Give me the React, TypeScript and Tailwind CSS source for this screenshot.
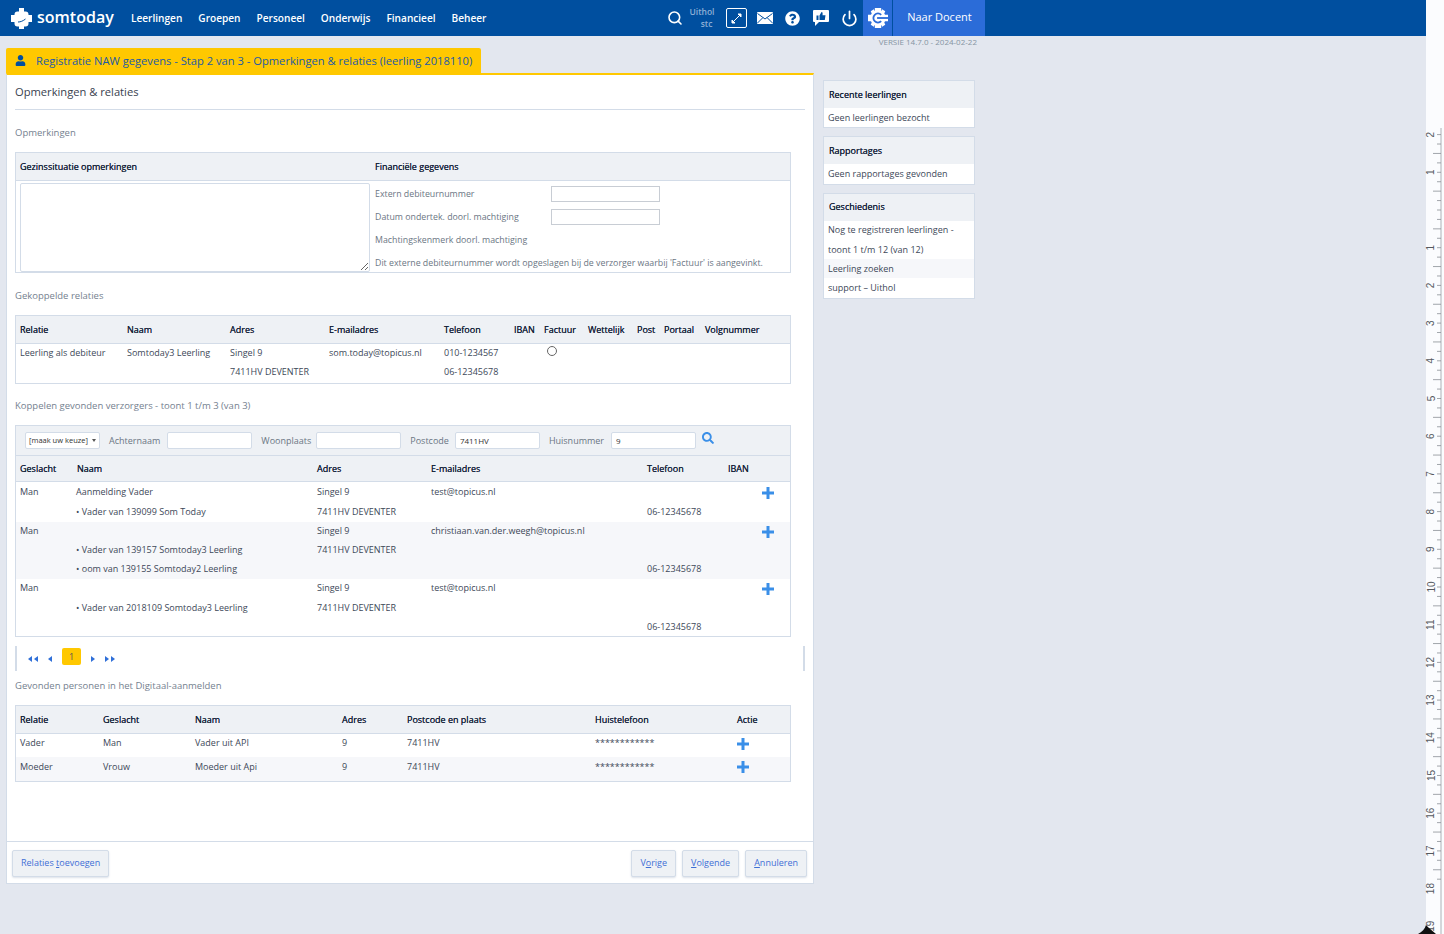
import React from "react";
import { FaUser, FaQuestionCircle, FaSearch } from "react-icons/fa";
import { Search, Power } from "lucide-react";

const Plus = () => (
  <svg width="12" height="12" viewBox="0 0 12 12" className="block translate-y-px">
    <path d="M4.5 0h3v4.5H12v3H7.5V12h-3V7.5H0v-3h4.5z" fill="#3a8fe8" />
  </svg>
);

const Logo = () => (
  <svg width="22" height="22" viewBox="0 0 22 22">
    <path d="M8 1h5v3.5h1.5a3 3 0 0 1 3 3V8H21v7h-3.500v1.500a3 3 0 0 1-3 3H13V22H8v-2.500H6.500a3 3 0 0 1-3-3V15H0V8h3.500v-.5a3 3 0 0 1 3-3H8z" fill="#fff" />
    <path d="M7 15c2.500 0 5-1 7.500-3" stroke="#004f9f" strokeWidth="1" fill="none" />
  </svg>
);

const Gear = () => (
  <svg width="20" height="20" viewBox="0 0 22 22">
    <circle cx="11" cy="11" r="8.500" fill="#fff" />
    <path d="M7.500 0h7v5h-7zM7.500 17h7v5h-7zM0 7.500h5v7H0zM17 7.500h5v7h-5z" fill="#fff" />
    <path d="M3 3.500 6.500 1.500 8 5 5 8zM19 3.500 15.500 1.500 14 5 17 8zM3 18.500 6.500 20.500 8 17 5 14zM19 18.500 15.500 20.500 14 17 17 14z" fill="#fff" />
    <path d="M14.500 7.500a5 5 0 1 0 0 7" stroke="#2b6cd8" strokeWidth="2" fill="none" />
    <path d="M10 11h12" stroke="#2b6cd8" strokeWidth="2" />
  </svg>
);

const Ruler = () => {
  const ticks: React.ReactNode[] = [];
  const base = 210;
  const step = 37.7;
  for (let i = -3; i < 20 * 4; i++) {
    const y = base + (i * step) / 4 + step * -2;
    const k = ((i % 4) + 4) % 4;
    const x1 = k === 2 ? 7 : 11;
    if (y >= 130) ticks.push(<line key={i} x1={x1} x2={15} y1={y} y2={y} stroke="#8a8f96" strokeWidth="0.8" />);
  }
  const labels: [string, number][] = [["2", base - step * 2], ["1", base - step]];
  for (let n = 1; n <= 19; n++) labels.push([String(n), base + step * n]);
  return (
    <svg width="18" height="934" className="block overflow-visible">
      <line x1="15" x2="15" y1="128" y2="934" stroke="#9aa0a6" strokeWidth="0.8" />
      {ticks}
      {labels.map(([t, y], i) => (
        <text key={i} x="5" y={y} fontSize="10" fill="#55595e" textAnchor="middle" transform={`rotate(-90 5 ${y}) translate(0 3.500)`} fontFamily="Liberation Sans, sans-serif">
          {t}
        </text>
      ))}
      <path d="M-8 934C-4 932 -1 929 0 925L3 928 L10 934Z" fill="#111" />
    </svg>
  );
};

const Th = ({ children }: { children?: React.ReactNode }) => (
  <th className="p-0 pl-[4px] text-left font-medium text-[#16233a] [text-shadow:0_0_0.4px_#16233a]">{children}</th>
);
const Td = ({ children }: { children?: React.ReactNode }) => (
  <td className="p-0 pl-1 align-middle whitespace-nowrap">{children}</td>
);

const Section = ({ children }: { children: React.ReactNode }) => (
  <div className="pl-[8px] text-[9.500px] leading-[14px] text-[#75818f]">{children}</div>
);

const NavItem = ({ children }: { children: React.ReactNode }) => (
  <span className="text-[10.100px] font-semibold text-white">{children}</span>
);

const SideBox = ({ title, items }: { title: string; items: [string, boolean][] }) => (
  <div className="border border-[#d3dce8] bg-white">
    <div className="flex h-[27px] items-center bg-[#eef1f5] pl-[5px] font-medium text-[#16233a] [text-shadow:0_0_0.4px_#16233a]">{title}</div>
    {items.map(([t, s], i) => (
      <div key={i} className={"flex h-[19.300px] items-center pl-[4px] " + (s ? "bg-[#f6f7fa]" : "")}>{t}</div>
    ))}
  </div>
);

const Btn = ({ before, u, after }: { before: string; u: string; after: string }) => (
  <span className="flex h-[27px] items-center rounded-[2px] border border-[#d3dce8] bg-[#eef1f5] px-[8px] pb-px text-[9px] whitespace-pre text-[#3f6fd6] shadow-[0_1px_2px_rgba(120,140,170,0.25)]">
    <span>
      {before}
      <span className="underline">{u}</span>
      {after}
    </span>
  </span>
);

const TinyInput = ({ className, value }: { className: string; value?: string }) => (
  <input readOnly value={value ?? ""} className={"h-[17px] rounded-[2px] border border-[#d3dce8] bg-white pl-1 text-[8px] text-[#333] " + className} />
);

const Pag = ({ d, double }: { d: "l" | "r"; double?: boolean }) => (
  <svg width={double ? 11 : 5} height="6" viewBox={double ? "0 0 11 6" : "0 0 5 6"} className="block">
    {d === "l" ? (
      <>
        <path d="M4 0v6L0 3z" fill="#2f6fd8" />
        {double && <path d="M10 0v6L6 3z" fill="#2f6fd8" />}
      </>
    ) : (
      <>
        <path d="M0 0v6l4-3z" fill="#2f6fd8" />
        {double && <path d="M6 0v6l4-3z" fill="#2f6fd8" />}
      </>
    )}
  </svg>
);

export default function App() {
  return (
    <div className="flex h-[934px] w-[1444px] overflow-hidden bg-[#fbfcfe] font-['Open_Sans',sans-serif] text-[9px] text-[#3d4858]">
      <div className="h-[934px] w-[1426px] shrink-0 bg-[#e3e7ef]">
        <header className="flex h-9 items-center bg-[#004f9f] pl-[11px]">
          <Logo />
          <span className="ml-[4px] w-[79px] pb-[2px] text-[16px] font-semibold whitespace-nowrap text-white">somtoday</span>
          <nav className="mt-px ml-[15px] flex gap-4">
            <NavItem>Leerlingen</NavItem>
            <NavItem>Groepen</NavItem>
            <NavItem>Personeel</NavItem>
            <NavItem>Onderwijs</NavItem>
            <NavItem>Financieel</NavItem>
            <NavItem>Beheer</NavItem>
          </nav>
          <div className="ml-[181px] flex h-9 items-center">
            <Search size={16} color="#fff" strokeWidth={2.4} />
            <div className="ml-[6px] w-[23px] text-right text-[8.500px] leading-[12px] font-semibold text-[#8fb0d6]">
              <div>Uithol</div>
              <div>stc</div>
            </div>
            <div className="ml-[14px] flex h-[20px] w-[21px] items-center justify-center rounded-[2px] border border-white">
              <svg width="11" height="11" viewBox="0 0 11 11"><path d="M7 1h3v3zM1 7v3h3zM3 8l5-5" stroke="#fff" strokeWidth="1" fill="#fff" /></svg>
            </div>
            <svg className="ml-[10px]" width="16" height="12" viewBox="0 0 16 12">
              <rect width="16" height="12" rx="1" fill="#fff" />
              <path d="M0.500 1.500 8 7l7.500-5.500M0.500 11 6 5.500M15.500 11 10 5.500" stroke="#004f9f" strokeWidth="1" fill="none" />
            </svg>
            <FaQuestionCircle className="ml-[12px]" size={15} color="#fff" />
            <svg className="ml-[13px]" width="16" height="16" viewBox="0 0 16 16">
              <path d="M1 0h14a1 1 0 0 1 1 1v10a1 1 0 0 1-1 1H6l-4 4v-4H1a1 1 0 0 1-1-1V1a1 1 0 0 1 1-1z" fill="#fff" />
              <path d="M3.500 5.500h2v4.500h-2zM6.500 10V5.500l2-3.500c1.200 0 1.300 1.200 1 3.300h3l-.7 4.700z" fill="#004f9f" />
            </svg>
            <Power className="ml-[12px]" size={17} color="#fff" strokeWidth={2.4} />
            <div className="ml-[5px] flex h-9 w-[29px] items-center justify-center bg-[#2b6cd8]"><Gear /></div>
            <div className="ml-px flex h-9 w-[92px] items-center justify-center bg-[#2b6cd8] pb-[2px] text-[11px] font-medium text-white">Naar Docent</div>
          </div>
        </header>

        <div className="h-3 w-[977px] text-right text-[8px] leading-3 text-[#8595a3]">VERSIE 14.7.0 - 2024-02-22</div>

        <div className="flex items-start">
          <main className="ml-[6px] w-[808px] shrink-0">
            <div className="flex h-[25px] w-[475px] items-center rounded-t-[2px] bg-[#ffc800] pt-[2px] pl-[9px] text-[11.170px] text-[#1c5aa6]">
              <FaUser className="mb-[3px]" size={11} color="#004f9f" />
              <span className="ml-[10px] whitespace-nowrap">Registratie NAW gegevens - Stap 2 van 3 - Opmerkingen &amp; relaties (leerling 2018110)</span>
            </div>
            <div className="h-[811px] border border-t-2 border-[#d3dce8] border-t-[#ffc800] bg-white">
              <div className="mr-[8px] ml-[8px] flex h-[35px] items-center border-b border-[#d3dce8] text-[11.170px] text-[#39424f]">Opmerkingen &amp; relaties</div>
              <div className="mt-[16px]"><Section>Opmerkingen</Section></div>

              <div className="mt-[12px] ml-[8px] h-[121px] w-[776px] border border-[#d3dce8]">
                <div className="flex h-[28px] items-center border-b border-[#d3dce8] bg-[#eef1f5] font-medium text-[#16233a] [text-shadow:0_0_0.4px_#16233a]">
                  <div className="w-[359px] pl-[4px]">Gezinssituatie opmerkingen</div>
                  <div>Financiële gegevens</div>
                </div>
                <div className="flex">
                  <textarea readOnly className="mt-[2px] ml-[4px] h-[89px] w-[350px] rounded-[2px] border border-[#d3dce8] bg-white" />
                  <div className="ml-[5px] flex-1 text-[8.800px] text-[#6b7684]">
                    <div className="flex h-[23px] items-center pt-[5px]"><span className="w-[176px]">Extern debiteurnummer</span><input readOnly className="-mt-[2px] h-[16px] w-[109px] border border-[#c8cdd4]" /></div>
                    <div className="flex h-[23px] items-center pt-[5px]"><span className="w-[176px]">Datum ondertek. doorl. machtiging</span><input readOnly className="-mt-[2px] h-[16px] w-[109px] border border-[#c8cdd4]" /></div>
                    <div className="flex h-[23px] items-center pt-[5px]">Machtingskenmerk doorl. machtiging</div>
                    <div className="flex h-[23px] items-center pt-[5px] whitespace-nowrap">Dit externe debiteurnummer wordt opgeslagen bij de verzorger waarbij 'Factuur' is aangevinkt.</div>
                  </div>
                </div>
              </div>

              <div className="mt-[16px]"><Section>Gekoppelde relaties</Section></div>

              <div className="mt-[12px] ml-[8px] w-[776px] border border-[#d3dce8] pb-[2px]">
                <table className="w-full table-fixed border-collapse">
                  <colgroup>
                    <col className="w-[107px]" /><col className="w-[103px]" /><col className="w-[99px]" /><col className="w-[115px]" /><col className="w-[70px]" /><col className="w-[30px]" /><col className="w-[44px]" /><col className="w-[49px]" /><col className="w-[27px]" /><col className="w-[41px]" /><col />
                  </colgroup>
                  <thead>
                    <tr className="h-[27px] border-b border-[#d3dce8] bg-[#eef1f5]">
                      <Th>Relatie</Th><Th>Naam</Th><Th>Adres</Th><Th>E-mailadres</Th><Th>Telefoon</Th><Th>IBAN</Th><Th>Factuur</Th><Th>Wettelijk</Th><Th>Post</Th><Th>Portaal</Th><Th>Volgnummer</Th>
                    </tr>
                  </thead>
                  <tbody>
                    <tr className="h-[19px]">
                      <Td>Leerling als debiteur</Td><Td>Somtoday3 Leerling</Td><Td>Singel 9</Td><Td>som.today@topicus.nl</Td><Td>010-1234567</Td><Td />
                      <td className="p-0 pl-[3px]"><span className="ml-[4px] block size-[10px] -translate-y-[2px] rounded-full border border-[#666] bg-white" /></td>
                      <Td /><Td /><Td /><Td />
                    </tr>
                    <tr className="h-[19px]">
                      <Td /><Td /><Td>7411HV DEVENTER</Td><Td /><Td>06-12345678</Td><Td /><Td /><Td /><Td /><Td /><Td />
                    </tr>
                  </tbody>
                </table>
              </div>

              <div className="mt-[15px]"><Section>Koppelen gevonden verzorgers - toont 1 t/m 3 (van 3)</Section></div>

              <div className="mt-[12px] ml-[8px] w-[776px] border border-[#d3dce8]">
                <div className="flex h-[29px] items-center bg-[#eef1f5] pl-[9px] text-[#6b7684]">
                  <div className="flex h-[17px] w-[75px] items-center justify-between rounded-[2px] border border-[#d3dce8] bg-white px-[3px] text-[7.500px] text-[#333]">[maak uw keuze]<span className="border-x-[2px] border-t-[3px] border-x-transparent border-t-[#555]" /></div>
                  <span className="ml-[9px]">Achternaam</span>
                  <TinyInput className="ml-[7px] w-[85px]" />
                  <span className="ml-[9px]">Woonplaats</span>
                  <TinyInput className="ml-[5px] w-[85px]" />
                  <span className="ml-[9px]">Postcode</span>
                  <TinyInput className="ml-[6px] w-[85px]" value="7411HV" />
                  <span className="ml-[9px]">Huisnummer</span>
                  <TinyInput className="ml-[7px] w-[85px]" value="9" />
                  <FaSearch className="mb-[5px] ml-[6px]" size={12} color="#3a8fe8" />
                </div>
                <table className="w-full table-fixed border-collapse">
                  <colgroup>
                    <col className="w-[56px]" /><col className="w-[241px]" /><col className="w-[114px]" /><col className="w-[216px]" /><col className="w-[81px]" /><col className="w-[34px]" /><col />
                  </colgroup>
                  <thead>
                    <tr className="h-[26px] border-y border-[#d3dce8] bg-[#eef1f5]">
                      <Th>Geslacht</Th><Th><span className="pl-px">Naam</span></Th><Th>Adres</Th><Th>E-mailadres</Th><Th>Telefoon</Th><Th>IBAN</Th><Th />
                    </tr>
                  </thead>
                  <tbody>
                    <tr className="h-[20px]"><Td>Man</Td><Td>Aanmelding Vader</Td><Td>Singel 9</Td><Td>test@topicus.nl</Td><Td /><Td /><td className="p-0 pl-[4px]"><Plus /></td></tr>
                    <tr className="h-[20px]"><Td /><Td>• Vader van 139099 Som Today</Td><Td>7411HV DEVENTER</Td><Td /><Td>06-12345678</Td><Td /><Td /></tr>
                    <tr className="h-[19px] bg-[#f6f7fa]"><Td>Man</Td><Td /><Td>Singel 9</Td><Td>christiaan.van.der.weegh@topicus.nl</Td><Td /><Td /><td className="p-0 pl-[4px]"><Plus /></td></tr>
                    <tr className="h-[19px] bg-[#f6f7fa]"><Td /><Td>• Vader van 139157 Somtoday3 Leerling</Td><Td>7411HV DEVENTER</Td><Td /><Td /><Td /><Td /></tr>
                    <tr className="h-[19px] bg-[#f6f7fa]"><Td /><Td>• oom van 139155 Somtoday2 Leerling</Td><Td /><Td /><Td>06-12345678</Td><Td /><Td /></tr>
                    <tr className="h-[19.300px]"><Td>Man</Td><Td /><Td>Singel 9</Td><Td>test@topicus.nl</Td><Td /><Td /><td className="p-0 pl-[4px]"><Plus /></td></tr>
                    <tr className="h-[19.300px]"><Td /><Td>• Vader van 2018109 Somtoday3 Leerling</Td><Td>7411HV DEVENTER</Td><Td /><Td /><Td /><Td /></tr>
                    <tr className="h-[19.300px]"><Td /><Td /><Td /><Td /><Td>06-12345678</Td><Td /><Td /></tr>
                  </tbody>
                </table>
              </div>

              <div className="mt-[9px] mr-[8px] ml-[8px] flex h-[25px] items-center border-x-2 border-[#d3dce8] pl-[11px]">
                <Pag d="l" double />
                <span className="ml-[9px]"><Pag d="l" /></span>
                <span className="mb-[4px] ml-[9px] flex h-[17px] w-[19px] items-center justify-center rounded-[2px] bg-[#ffc800] text-[#555]">1</span>
                <span className="ml-[10px]"><Pag d="r" /></span>
                <span className="ml-[9px]"><Pag d="r" double /></span>
              </div>

              <div className="mt-[8px]"><Section>Gevonden personen in het Digitaal-aanmelden</Section></div>

              <div className="mt-[12px] ml-[8px] w-[776px] border border-[#d3dce8]">
                <table className="w-full table-fixed border-collapse">
                  <colgroup>
                    <col className="w-[83px]" /><col className="w-[92px]" /><col className="w-[147px]" /><col className="w-[65px]" /><col className="w-[188px]" /><col className="w-[142px]" /><col />
                  </colgroup>
                  <thead>
                    <tr className="h-[27px] border-b border-[#d3dce8] bg-[#eef1f5]">
                      <Th>Relatie</Th><Th>Geslacht</Th><Th>Naam</Th><Th>Adres</Th><Th>Postcode en plaats</Th><Th>Huistelefoon</Th><Th>Actie</Th>
                    </tr>
                  </thead>
                  <tbody>
                    <tr className="h-[24px] [&>td]:pb-[6px]"><Td>Vader</Td><Td>Man</Td><Td>Vader uit API</Td><Td>9</Td><Td>7411HV</Td><Td>************</Td><td className="p-0 pl-[4px]"><Plus /></td></tr>
                    <tr className="h-[24px] bg-[#f6f7fa] [&>td]:pb-[6px]"><Td>Moeder</Td><Td>Vrouw</Td><Td>Moeder uit Api</Td><Td>9</Td><Td>7411HV</Td><Td>************</Td><td className="p-0 pl-[4px]"><Plus /></td></tr>
                  </tbody>
                </table>
              </div>

              <div className="mt-[59px] flex h-[43px] items-center justify-between border-t border-[#d3dce8] pr-[6px] pl-[5px]">
                <Btn before="Relaties " u="t" after="oevoegen" />
                <div className="flex gap-[6px]">
                  <Btn before="V" u="o" after="rige" />
                  <Btn before="" u="V" after="olgende" />
                  <Btn before="" u="A" after="nnuleren" />
                </div>
              </div>
            </div>
          </main>

          <aside className="mt-[32px] ml-[9px] flex w-[152px] flex-col gap-2">
            <SideBox title="Recente leerlingen" items={[["Geen leerlingen bezocht", false]]} />
            <SideBox title="Rapportages" items={[["Geen rapportages gevonden", false]]} />
            <SideBox
              title="Geschiedenis"
              items={[
                ["Nog te registreren leerlingen -", false],
                ["toont 1 t/m 12 (van 12)", false],
                ["Leerling zoeken", true],
                ["support – Uithol", false],
              ]}
            />
          </aside>
        </div>
      </div>
      <aside className="w-[18px] shrink-0"><Ruler /></aside>
    </div>
  );
}
